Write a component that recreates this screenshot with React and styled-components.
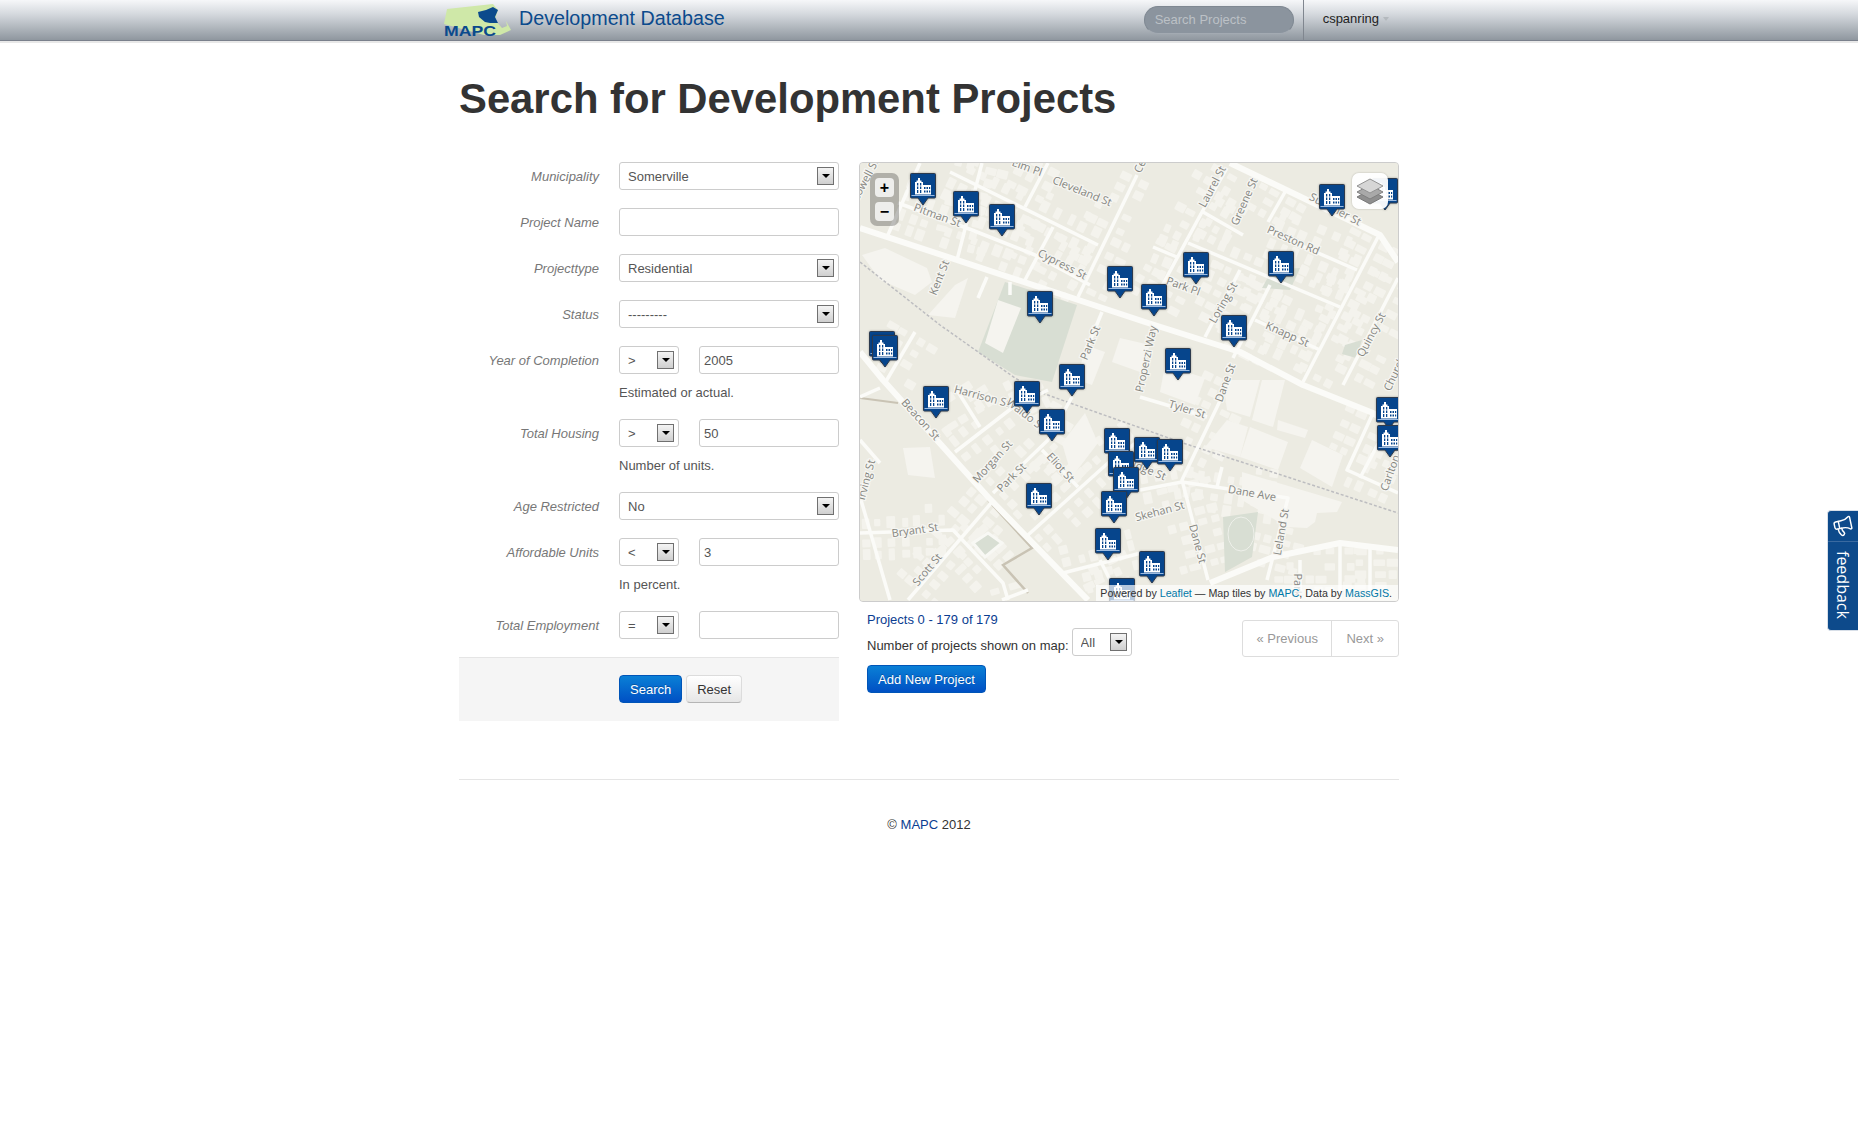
import React from "react";
import styled, { createGlobalStyle } from "styled-components";
import { Megaphone } from "lucide-react";

const GlobalStyle = createGlobalStyle`
  html, body { margin: 0; padding: 0; background: #fff; }
  body {
    font-family: "Liberation Sans", Arial, sans-serif;
    font-size: 13px;
    line-height: 18px;
    color: #333;
  }
  a { text-decoration: none; }
`;

// navbar
const Navbar = styled.header`
  height: 40px;
  background: linear-gradient(to bottom, #f6f7f9 0%, #d5d9de 35%, #8f979f 100%);
  border-bottom: 1px solid #7a808c;
  box-shadow: 0 2px 0 #e8e8e8;
`;

const NavInner = styled.div`
  width: 940px;
  height: 100%;
  margin: 0 auto;
  display: flex;
  align-items: center;
`;

const Logo = styled.svg`
  width: 70px;
  height: 40px;
  margin-left: -15px;
  flex: none;
`;

const Brand = styled.a`
  margin-left: 5px;
  margin-top: -5px;
  font-size: 19.7px;
  color: #0b4a8c;
`;

const NavSearch = styled.input`
  margin-left: auto;
  box-sizing: border-box;
  width: 150px;
  height: 28px;
  padding: 0 10px 2px;
  border: 1px solid #7f8892;
  border-bottom-color: #a3aab2;
  border-radius: 14px;
  background: #8b949e;
  font: 13px "Liberation Sans", Arial, sans-serif;
  &::placeholder { color: #bcc1c6; opacity: 1; }
`;

const UserMenu = styled.div`
  margin-left: 9px;
  height: 100%;
  display: flex;
  align-items: center;
  padding: 0 10px 2px 19px;
  box-sizing: border-box;
  border-left: 1px solid #80868f;
  color: #222;
`;

const Caret = styled.span`
  width: 0;
  height: 0;
  margin-left: 4px;
  border-left: 3px solid transparent;
  border-right: 3px solid transparent;
  border-top: 4px solid #b4b9be;
`;

// page
const Page = styled.main`
  width: 940px;
  margin: 0 auto;
`;

const Title = styled.h1`
  margin: 28px 0 33px;
  font-size: 41.8px;
  line-height: 60px;
  font-weight: bold;
  color: #333;
`;

const Columns = styled.div`
  display: flex;
  gap: 20px;
  align-items: flex-start;
`;

// form
const Form = styled.form`
  width: 380px;
  flex: none;
`;

const Group = styled.div`
  display: flex;
  margin-bottom: 18px;
`;

const Label = styled.label`
  width: 140px;
  height: 28px;
  margin-right: 20px;
  text-align: right;
  font-style: italic;
  color: #777;
  line-height: 30px;
  flex: none;
`;

const Controls = styled.div`
  width: 220px;
`;

const InlineControls = styled.div`
  display: flex;
  justify-content: space-between;
`;

const TextInput = styled.input`
  box-sizing: border-box;
  display: block;
  width: ${(p) => p.$w || 220}px;
  height: 28px;
  padding: 0 4px;
  border: 1px solid #ccc;
  border-radius: 3px;
  background: #fff;
  color: #555;
  font: 13px "Liberation Sans", Arial, sans-serif;
`;

const SelectBox = styled.div`
  position: relative;
  flex: none;
  box-sizing: border-box;
  width: ${(p) => p.$w || 220}px;
  height: 28px;
  border: 1px solid #ccc;
  border-radius: 3px;
  background: #fff;
`;

const NativeSelect = styled.select`
  width: 100%;
  height: 100%;
  padding: 0 0 0 8px;
  border: 0;
  background: transparent;
  appearance: none;
  color: #555;
  font: 13px "Liberation Sans", Arial, sans-serif;
`;

const SelectArrow = styled.span`
  position: absolute;
  top: 4px;
  right: 4px;
  box-sizing: border-box;
  width: 17px;
  height: 18px;
  border: 1px solid #707070;
  background: linear-gradient(to bottom, #f4f4f4, #cfcfcf);
  pointer-events: none;
  &::after {
    content: "";
    position: absolute;
    left: 4px;
    top: 6px;
    border-left: 4px solid transparent;
    border-right: 4px solid transparent;
    border-top: 4px solid #000;
  }
`;

const Help = styled.p`
  margin: 10px 0 -1px;
  color: #555;
`;

const FormActions = styled.div`
  display: flex;
  gap: 4px;
  padding: 17px 0 18px 160px;
  border-top: 1px solid #e5e5e5;
  background: #f5f5f5;
`;

const PrimaryButton = styled.button`
  box-sizing: border-box;
  height: 28px;
  padding: 0 ${(p) => p.$pad || 10}px;
  border: 1px solid #0055b8;
  border-radius: 4px;
  background: linear-gradient(to bottom, #0a80d6, #0050c4);
  color: #fff;
  font: 13px "Liberation Sans", Arial, sans-serif;
  text-shadow: 0 -1px 0 rgba(0, 0, 0, 0.25);
`;

const PlainButton = styled.button`
  box-sizing: border-box;
  height: 28px;
  padding: 0 10px;
  border: 1px solid #dcdcdc;
  border-bottom-color: #b5b5b5;
  border-radius: 4px;
  background: linear-gradient(to bottom, #fff, #e6e6e6);
  color: #333;
  font: 13px "Liberation Sans", Arial, sans-serif;
`;

// map
const MapColumn = styled.section`
  width: 540px;
  flex: none;
`;

const MapBox = styled.div`
  position: relative;
  box-sizing: border-box;
  width: 540px;
  height: 440px;
  border: 1px solid #ccc;
  border-radius: 4px;
  overflow: hidden;
  background: #ecebe2;
`;

const MapDrawing = styled.svg`
  display: block;
  width: 538px;
  height: 438px;
`;

const Pin = styled.svg.attrs((p) => ({
  style: { left: p.$x - 860, top: p.$y - 163 },
}))`
  position: absolute;
  width: 26px;
  height: 33px;
  filter: drop-shadow(0 0 1px rgba(0, 0, 0, 0.3));
`;

const ZoomControl = styled.div`
  position: absolute;
  top: 10px;
  left: 10px;
  display: flex;
  flex-direction: column;
  gap: 5px;
  padding: 5px;
  border-radius: 7px;
  background: rgba(0, 0, 0, 0.25);
`;

const ZoomButton = styled.div`
  width: 19px;
  height: 19px;
  border-radius: 4px;
  background: rgba(255, 255, 255, 0.78);
  display: flex;
  align-items: center;
  justify-content: center;
  font: bold 16px/19px "Liberation Sans", Arial, sans-serif;
  color: #000;
`;

const LayersControl = styled.div`
  position: absolute;
  top: 10px;
  right: 10px;
  width: 36px;
  height: 36px;
  border-radius: 7px;
  background: rgba(255, 255, 255, 0.95);
  box-shadow: 0 0 2px rgba(0, 0, 0, 0.25);
  display: flex;
  align-items: center;
  justify-content: center;
`;

const Attribution = styled.div`
  position: absolute;
  right: 0;
  bottom: 0;
  padding: 0 6px 0 4px;
  height: 16px;
  line-height: 16px;
  font-size: 10.7px;
  color: #333;
  background: rgba(255, 255, 255, 0.7);
  white-space: nowrap;
  a { color: #0078a8; }
`;

// list info
const ListInfo = styled.div`
  display: flex;
  justify-content: space-between;
  align-items: flex-start;
  padding-left: 8px;
`;

const InfoText = styled.div`
  padding-top: 9px;
`;

const Count = styled.div`
  color: #0b3d91;
`;

const MapCount = styled.div`
  display: flex;
  align-items: flex-start;
  gap: 3px;
  margin: -1px 0 9px;
`;

const MapCountLabel = styled.span`
  margin-top: 9px;
`;

const Pager = styled.nav`
  display: flex;
  margin-top: 18px;
  height: 37px;
  border: 1px solid #ddd;
  border-radius: 3px;
  box-sizing: border-box;
`;

const PagerItem = styled.span`
  display: flex;
  align-items: center;
  padding: 0 ${(p) => p.$pad}px;
  color: #999;
  border-left: ${(p) => (p.$divided ? "1px solid #ddd" : "0")};
`;

// footer
const Rule = styled.hr`
  margin: 58px 0 36px;
  border: 0;
  border-top: 1px solid #e5e5e5;
`;

const Footer = styled.footer`
  text-align: center;
  color: #333;
  a { color: #0b3d91; }
`;

const FeedbackTab = styled.aside`
  position: fixed;
  top: 510px;
  right: 0;
  box-sizing: border-box;
  width: 31px;
  height: 121px;
  border: 1px solid #d8dfe8;
  border-right: 0;
  border-radius: 4px 0 0 4px;
  background: #0d4a8b;
  color: #fff;
  display: flex;
  flex-direction: column;
  align-items: center;
`;

const FeedbackIcon = styled.div`
  width: 100%;
  height: 30px;
  display: flex;
  align-items: center;
  justify-content: center;
  border-bottom: 1px solid #3a6aa0;
  svg { transform: rotate(-12deg); }
`;

const FeedbackText = styled.span`
  margin-top: 9px;
  writing-mode: vertical-rl;
  font-family: "Open Sans", sans-serif;
  font-size: 16px;
  line-height: 20px;
`;

// map data, page coordinates
const MAJOR = [
  "860,228 1145,322 1240,352 1303,385 1373,413 1398,430",
  "1230,163 1380,235 1398,262",
  "860,352 883,380 988,497 1088,600",
  "1210,583 1273,557 1340,543 1398,550",
];

const STREETS = [
  ["950,172 1098,245", 1],
  ["898,203 972,230 1035,255 1090,285", 1],
  ["982,163 957,260", 1],
  ["920,163 887,237", 0],
  ["1048,163 1025,207", 1],
  ["1137,175 1078,297", 1],
  ["1053,227 1025,280", 1],
  ["1102,312 1083,358", 0],
  ["987,277 978,298", 0],
  ["1010,282 1010,295", 0],
  ["915,332 885,383", 1],
  ["1227,168 1202,212 1150,308", 1],
  ["1203,212 1243,235", 1],
  ["1285,192 1268,222", 1],
  ["1153,247 1177,257", 1],
  ["1188,243 1340,307", 1],
  ["1270,232 1357,270", 1],
  ["1378,237 1303,382", 1],
  ["1240,270 1205,337", 1],
  ["1270,285 1233,358", 1],
  ["1255,320 1320,350", 1],
  ["1398,278 1343,385", 1],
  ["955,452 1012,408 1048,390", 1],
  ["955,387 980,427", 1],
  ["860,397 880,388", 0],
  ["993,493 1048,440 1072,397", 1],
  ["1042,450 1078,487", 1],
  ["1028,535 1108,463 1140,440", 1],
  ["860,533 953,530 1003,583 1008,600", 1],
  ["992,502 908,600", 1],
  ["860,440 880,463", 0],
  ["861,500 890,600", 0],
  ["1063,573 1145,552", 1],
  ["1002,600 1028,590", 0],
  ["1140,397 1207,417", 0],
  ["1230,380 1182,480 1208,580", 1],
  ["1140,490 1182,482 1288,498 1267,580", 1],
  ["1373,413 1347,470 1398,493", 1],
  ["1380,440 1360,478", 0],
  ["1222,467 1217,487", 0],
  ["1100,560 1120,600", 1],
  ["1300,560 1300,600", 1],
  ["1340,545 1340,600", 1],
  ["1370,545 1370,600", 1],
];

const LOTS = [
  "862,255 885,248 927,268 932,282 915,295 880,280",
  "955,285 968,278 955,318 928,315",
  "998,300 1021,308 1003,353 985,343",
  "1062,443 1085,413 1098,443 1072,477",
  "903,448 930,447 935,478 908,475",
  "1227,420 1248,427 1240,457 1205,447",
  "1250,427 1288,442 1278,470 1240,457",
  "1312,440 1343,455 1332,487 1300,468",
  "1242,472 1342,502 1337,512 1317,513 1315,522 1307,528 1287,527 1242,500",
  "1223,380 1260,380 1250,417 1227,410",
  "1262,380 1285,380 1273,427 1252,420",
  "1278,420 1308,430 1305,438 1277,430",
  "1120,338 1150,345 1140,372 1112,362",
  "1165,365 1205,378 1195,405 1160,392",
  "1085,345 1105,352 1092,385 1078,380",
];

const GREENS = [
  "978,352 1005,282 1077,305 1052,382 1015,375",
  "1223,517 1258,512 1252,557 1225,572",
  "973,543 988,533 1002,543 985,557",
  "1272,270 1300,268 1290,290 1262,288",
  "1345,345 1362,340 1356,358 1342,354",
];

const LABELS = [
  ["Elm Pl", 1027, 168, 20],
  ["Cleveland St", 1082, 192, 22],
  ["Pitman St", 937, 216, 20],
  ["Cypress St", 1062, 265, 27],
  ["Kent St", 940, 278, -68],
  ["Park St", 1091, 343, -68],
  ["Cedar St", 1147, 153, -65],
  ["Lowell St", 866, 180, -62],
  ["Laurel St", 1213, 187, -62],
  ["Greene St", 1245, 202, -66],
  ["Preston Rd", 1293, 241, 24],
  ["Summer St", 1335, 210, 28],
  ["Park Pl", 1183, 287, 20],
  ["Loring St", 1224, 303, -60],
  ["Knapp St", 1287, 335, 24],
  ["Quincy St", 1372, 335, -62],
  ["Properzi Way", 1147, 359, -78],
  ["Dane St", 1226, 383, -70],
  ["Church St", 1398, 368, -65],
  ["Harrison St", 982, 397, 15],
  ["Beacon St", 920, 420, 48],
  ["Waldo St", 1025, 415, 38],
  ["Morgan St", 993, 462, -48],
  ["Park St", 1012, 478, -45],
  ["Eliot St", 1060, 468, 48],
  ["Irving St", 867, 480, -75],
  ["Bryant St", 915, 531, -8],
  ["Scott St", 928, 570, -50],
  ["Skehan St", 1160, 512, -15],
  ["Tyler St", 1187, 410, 17],
  ["Dane Ave", 1252, 494, 10],
  ["Leland St", 1282, 532, -80],
  ["Dane St", 1197, 544, 75],
  ["Carlton St", 1393, 467, -70],
  ["Ridge St", 1146, 470, 22],
  ["Park", 1297, 585, 90],
];

const PINS = [
  [1372, 178], [910, 173], [1319, 184], [953, 191], [989, 204], [1268, 251],
  [1183, 252], [1107, 266], [1141, 284], [1027, 291], [1221, 315], [869, 331],
  [872, 335], [1165, 348], [1059, 364], [1014, 381], [923, 386], [1376, 397],
  [1039, 409], [1377, 425], [1104, 428], [1134, 437], [1157, 439], [1108, 451],
  [1113, 467], [1026, 483], [1101, 491], [1095, 528], [1139, 551], [1109, 578],
];

// little houses along the residential streets, two rows deep
function makeHouses() {
  let seed = 7;
  const rnd = () => {
    seed = (seed * 16807) % 2147483647;
    return seed / 2147483647;
  };
  const houses = [];
  STREETS.forEach(([line, dense]) => {
    if (!dense) return;
    const pts = line.split(" ").map((p) => p.split(",").map(Number));
    for (let i = 0; i < pts.length - 1; i++) {
      const [x1, y1] = pts[i];
      const [x2, y2] = pts[i + 1];
      const len = Math.hypot(x2 - x1, y2 - y1);
      const ang = (Math.atan2(y2 - y1, x2 - x1) * 180) / Math.PI;
      const nx = -(y2 - y1) / len;
      const ny = (x2 - x1) / len;
      for (let d = 6; d < len - 4; d += 11 + rnd() * 5) {
        [-1, 1].forEach((side) => {
          [[9, 0.12], [21, 0.5]].forEach(([base, skip]) => {
            if (rnd() < skip) return;
            const off = base + rnd() * 2;
            const cx = x1 + ((x2 - x1) * d) / len + nx * off * side;
            const cy = y1 + ((y2 - y1) * d) / len + ny * off * side;
            houses.push({
              x: cx,
              y: cy,
              w: 6 + rnd() * 3,
              h: 7 + rnd() * 5,
              r: ang,
            });
          });
        });
      }
    }
  });
  return houses;
}

const HOUSES = makeHouses();

function Select({ value, width }) {
  return (
    <SelectBox $w={width}>
      <NativeSelect defaultValue={value}>
        <option>{value}</option>
      </NativeSelect>
      <SelectArrow />
    </SelectBox>
  );
}

function CompareField({ label, op, value, help }) {
  return (
    <Group>
      <Label>{label}</Label>
      <Controls>
        <InlineControls>
          <Select value={op} width={60} />
          <TextInput $w={140} defaultValue={value} />
        </InlineControls>
        {help && <Help>{help}</Help>}
      </Controls>
    </Group>
  );
}

function MapMarker({ x, y }) {
  return (
    <Pin $x={x} $y={y} viewBox="0 0 26 33">
      <path d="M1.5 .5H24.5a1 1 0 0 1 1 1V24a1 1 0 0 1-1 1H18L13 32 8 25H1.5a1 1 0 0 1-1-1V1.500a1 1 0 0 1 1-1Z" fill="#06458c" stroke="#2c3a4d" />
      <path d="M5 21.500V9H6.500V7.500H8V5H10V7.500H11.500V9H13V12H21V21.500Z" fill="#fff" />
      <path d="M7 10h1.300v2.500H7ZM10 10h1.300v2.500H10ZM7 13.500h1.300v2.500H7ZM10 13.500h1.300v2.500H10ZM7 17h1.300v3H7ZM10 17h1.300v3H10ZM14 14h1.500v2H14ZM16.500 14h1.500v2H16.500ZM19 14h1.200v2H19ZM14 17.500h1.500v2H14ZM16.500 17.500h1.500v2H16.500ZM19 17.500h1.200v2H19Z" fill="#06458c" />
      <path d="M1.500 22.500H24.500" stroke="#9dbbe0" strokeWidth="1" />
    </Pin>
  );
}

function MapView() {
  return (
    <MapBox>
      <MapDrawing viewBox="860 163 538 438">
        <rect x="860" y="163" width="538" height="438" fill="#ecebe2" />
        {HOUSES.map((h, i) => (
          <rect
            key={i}
            x={h.x - h.w / 2}
            y={h.y - h.h / 2}
            width={h.w}
            height={h.h}
            rx="1"
            fill="#f4f3ed"
            transform={`rotate(${h.r} ${h.x} ${h.y})`}
          />
        ))}
        {GREENS.map((p) => (
          <polygon key={p} points={p} fill="#d8ded3" />
        ))}
        {LOTS.map((p) => (
          <polygon key={p} points={p} fill="#f5f4ef" />
        ))}
        <polygon points="973,543 988,533 1002,543 985,557" fill="none" stroke="#f8f8f4" strokeWidth="3" />
        <ellipse cx="1241" cy="534" rx="13" ry="17" fill="none" stroke="#eef0ea" strokeWidth="1" />
        <polyline points="860,262 940,325 1015,378 1042,393 1183,443 1398,513" fill="none" stroke="#bdbdc0" strokeWidth="1.500" strokeDasharray="3 2" />
        <polyline points="988,500 1032,548 1003,565 1028,593" fill="none" stroke="#c9c3b4" strokeWidth="2.500" />
        <polyline points="860,398 898,403" fill="none" stroke="#c9c3b4" strokeWidth="2" />
        {STREETS.map(([line]) => (
          <polyline key={line} points={line} fill="none" stroke="#fbfbf8" strokeWidth="3.500" strokeLinejoin="round" />
        ))}
        {MAJOR.map((line) => (
          <polyline key={line} points={line} fill="none" stroke="#fbfbf8" strokeWidth="6" strokeLinejoin="round" />
        ))}
        {LABELS.map(([text, x, y, r]) => (
          <text
            key={text + x}
            x={x}
            y={y}
            transform={`rotate(${r} ${x} ${y})`}
            textAnchor="middle"
            dominantBaseline="middle"
            fontFamily="Open Sans, sans-serif"
            fontSize="11"
            fill="#85857f"
            stroke="#f6f6f2"
            strokeWidth="2.500"
            paintOrder="stroke"
          >
            {text}
          </text>
        ))}
      </MapDrawing>
      {PINS.map(([x, y]) => (
        <MapMarker key={`${x}-${y}`} x={x} y={y} />
      ))}
      <ZoomControl>
        <ZoomButton>+</ZoomButton>
        <ZoomButton>−</ZoomButton>
      </ZoomControl>
      <LayersControl>
        <svg width="28" height="28" viewBox="0 0 28 28">
          <path d="M14 13 27 20 14 27 1 20Z" fill="#8f8f8f" stroke="#777" />
          <path d="M14 8 27 15 14 22 1 15Z" fill="#a9a9a9" stroke="#808080" />
          <path d="M14 2 27 9 14 16 1 9Z" fill="#d6d6d6" stroke="#939393" />
        </svg>
      </LayersControl>
      <Attribution>
        Powered by <a href="#leaflet">Leaflet</a> — Map tiles by <a href="#mapc">MAPC</a>, Data by <a href="#massgis">MassGIS</a>.
      </Attribution>
    </MapBox>
  );
}

export default function App() {
  return (
    <>
      <GlobalStyle />
      <Navbar>
        <NavInner>
          <Logo viewBox="0 0 70 40">
            <path d="M3 9 49 4 54 10 51 20 58 28 63 26 62 21 67 30 56 35 40 35 0 24Z" fill="#cfe8a8" />
            <path d="M34 12 42 10 49 7 54 10 51 17 54 23 46 23 41 22 35 17Z" fill="#0b4a8c" />
            <text x="0" y="35.500" fontFamily="Liberation Sans, sans-serif" fontWeight="bold" fontSize="15" textLength="52" lengthAdjust="spacingAndGlyphs" fill="#0b4a8c">
              MAPC
            </text>
          </Logo>
          <Brand href="#home">Development Database</Brand>
          <NavSearch placeholder="Search Projects" />
          <UserMenu>
            cspanring
            <Caret />
          </UserMenu>
        </NavInner>
      </Navbar>
      <Page>
        <Title>Search for Development Projects</Title>
        <Columns>
          <Form>
            <Group>
              <Label>Municipality</Label>
              <Controls>
                <Select value="Somerville" />
              </Controls>
            </Group>
            <Group>
              <Label>Project Name</Label>
              <Controls>
                <TextInput />
              </Controls>
            </Group>
            <Group>
              <Label>Projecttype</Label>
              <Controls>
                <Select value="Residential" />
              </Controls>
            </Group>
            <Group>
              <Label>Status</Label>
              <Controls>
                <Select value="---------" />
              </Controls>
            </Group>
            <CompareField label="Year of Completion" op=">" value="2005" help="Estimated or actual." />
            <CompareField label="Total Housing" op=">" value="50" help="Number of units." />
            <Group>
              <Label>Age Restricted</Label>
              <Controls>
                <Select value="No" />
              </Controls>
            </Group>
            <CompareField label="Affordable Units" op="<" value="3" help="In percent." />
            <CompareField label="Total Employment" op="=" />
            <FormActions>
              <PrimaryButton type="button">Search</PrimaryButton>
              <PlainButton type="button">Reset</PlainButton>
            </FormActions>
          </Form>
          <MapColumn>
            <MapView />
            <ListInfo>
              <InfoText>
                <Count>Projects 0 - 179 of 179</Count>
                <MapCount>
                  <MapCountLabel>Number of projects shown on map:</MapCountLabel>
                  <Select value="All" width={60} />
                </MapCount>
                <PrimaryButton type="button">Add New Project</PrimaryButton>
              </InfoText>
              <Pager>
                <PagerItem $pad={13.5}>« Previous</PagerItem>
                <PagerItem $pad={14} $divided>Next »</PagerItem>
              </Pager>
            </ListInfo>
          </MapColumn>
        </Columns>
        <Rule />
        <Footer>
          © <a href="#mapc">MAPC</a> 2012
        </Footer>
      </Page>
      <FeedbackTab>
        <FeedbackIcon>
          <Megaphone size={22} strokeWidth={1.6} />
        </FeedbackIcon>
        <FeedbackText>feedback</FeedbackText>
      </FeedbackTab>
    </>
  );
}
